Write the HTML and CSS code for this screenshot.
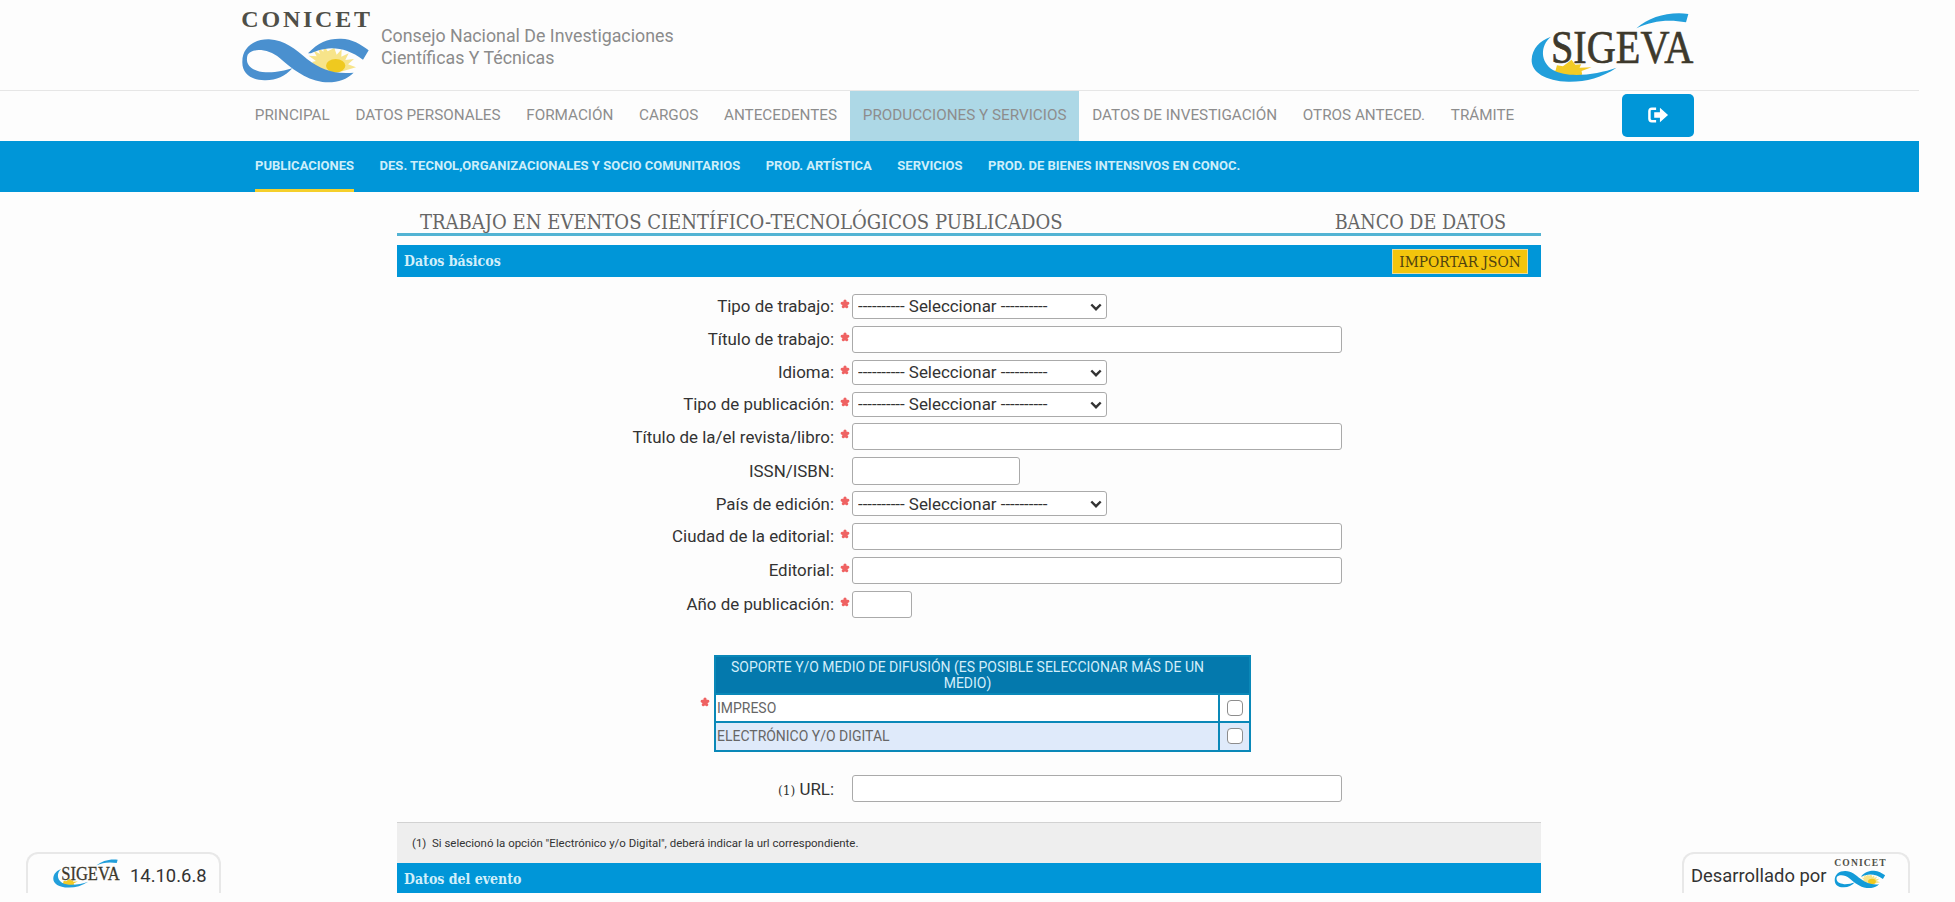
FILE: index.html
```html
<!DOCTYPE html>
<html lang="es">
<head>
<meta charset="utf-8">
<title>SIGEVA - Trabajo en eventos científico-tecnológicos publicados</title>
<link rel="stylesheet" href="styles.css">
</head>
<body>
<svg class="defs" aria-hidden="true">
  <symbol id="conicet" viewBox="0 0 435 270">
    <text class="conicet-word" x="19" y="80" textLength="386" lengthAdjust="spacing">CONICET</text>
    <path class="rays" d="M298 144l7 20 15-16-1 22 22-10-10 20 26-3-18 16 24 9-28 8-50 14-44-26-10-12 12-3-22-16 24 2-10-18 20 11-8-22 18 15 2-18 11 17z"/>
    <ellipse class="core" cx="302" cy="197" rx="29" ry="20"/>
    <path class="ribbon" d="M22 185C22 142 58 117 102 118C150 120 180 148 216 177C258 209 300 224 356 218C332 241 302 250 262 246C208 238 168 203 134 174C100 146 52 143 38 164C28 195 52 214 92 217C125 218 148 212 172 205C150 230 122 242 88 241C46 240 21 220 22 185Z"/>
    <path class="ribbon" d="M219 160C250 126 280 115 318 116C352 117 376 132 401 151L384 179C352 156 322 145 290 145C262 146 240 154 228 160Z"/>
  </symbol>
  <symbol id="sigeva" viewBox="18 18 490 212">
    <path class="star" d="M140 161l11 15 18-2-5 11 36-2-30 12 2 11-40 5-50-6-10-9 20-3 4-16 18 3z"/>
    <path class="arc" d="M78 92C44 120 46 168 84 192C130 218 215 206 275 185C230 216 180 228 130 227C62 225 18 198 20 160C22 128 44 104 78 92Z"/>
    <path class="arc" d="M335 66C375 32 430 16 491 23L484 48C430 38 380 44 335 66Z"/>
    <text class="sigeva-word" x="78" y="170" textLength="428" lengthAdjust="spacingAndGlyphs">SIGEVA</text>
  </symbol>
  <symbol id="req" viewBox="0 0 9 9">
    <path d="M4.5 4.7V2M4.5 4.7L2 3.900M4.5 4.7L7 3.900M4.5 4.7L3 6.900M4.5 4.7L6 6.900" fill="none" stroke="#ef6262" stroke-width="2.900" stroke-linecap="round"/>
  </symbol>
  <symbol id="chev" viewBox="0 0 12 8">
    <path d="M1.3 1.5L6 6.2L10.7 1.5" fill="none" stroke="#333" stroke-width="2.4"/>
  </symbol>
</svg>

<div class="page">
  <header class="brand">
    <svg class="brand-logo"><use href="#conicet"/></svg>
    <p class="brand-name">Consejo Nacional De Investigaciones<br>Científicas Y Técnicas</p>
    <svg class="brand-sigeva"><use href="#sigeva"/></svg>
  </header>

  <nav class="mainnav">
    <a>PRINCIPAL</a><a>DATOS PERSONALES</a><a>FORMACIÓN</a><a>CARGOS</a><a>ANTECEDENTES</a><a class="active">PRODUCCIONES Y SERVICIOS</a><a>DATOS DE INVESTIGACIÓN</a><a>OTROS ANTECED.</a><a>TRÁMITE</a>
    <button class="exit" aria-label="Salir">
      <svg viewBox="0 0 22 16"><path d="M8.5 1.5H4Q1.5 1.5 1.5 4V12Q1.5 14.500 4 14.500H8.500" fill="none" stroke="#fff" stroke-width="2.600"/><path d="M6.500 5H12.500V.5L21 8L12.500 15.500V11H6.500Z" fill="#fff"/></svg>
    </button>
  </nav>

  <nav class="subnav">
    <a class="current">PUBLICACIONES</a><a>DES. TECNOL,ORGANIZACIONALES Y SOCIO COMUNITARIOS</a><a>PROD. ARTÍSTICA</a><a>SERVICIOS</a><a>PROD. DE BIENES INTENSIVOS EN CONOC.</a>
  </nav>

  <main class="content">
    <div class="title"><h1>TRABAJO EN EVENTOS CIENTÍFICO-TECNOLÓGICOS PUBLICADOS</h1><h2>BANCO DE DATOS</h2></div>
    <div class="section"><h3>Datos básicos</h3><button class="import">IMPORTAR JSON</button></div>

    <form class="fields">
      <label>Tipo de trabajo:</label><svg class="req"><use href="#req"/></svg>
      <div class="select"><select><option>---------- Seleccionar ----------</option></select><svg><use href="#chev"/></svg></div>
      <label>Título de trabajo:</label><svg class="req"><use href="#req"/></svg>
      <input class="long" type="text">
      <label>Idioma:</label><svg class="req"><use href="#req"/></svg>
      <div class="select"><select><option>---------- Seleccionar ----------</option></select><svg><use href="#chev"/></svg></div>
      <label>Tipo de publicación:</label><svg class="req"><use href="#req"/></svg>
      <div class="select"><select><option>---------- Seleccionar ----------</option></select><svg><use href="#chev"/></svg></div>
      <label>Título de la/el revista/libro:</label><svg class="req"><use href="#req"/></svg>
      <input class="long" type="text">
      <label>ISSN/ISBN:</label><span></span>
      <input class="mid" type="text">
      <label>País de edición:</label><svg class="req"><use href="#req"/></svg>
      <div class="select"><select><option>---------- Seleccionar ----------</option></select><svg><use href="#chev"/></svg></div>
      <label>Ciudad de la editorial:</label><svg class="req"><use href="#req"/></svg>
      <input class="long" type="text">
      <label>Editorial:</label><svg class="req"><use href="#req"/></svg>
      <input class="long" type="text">
      <label>Año de publicación:</label><svg class="req"><use href="#req"/></svg>
      <input class="short" type="text">
    </form>

    <div class="support">
      <svg class="req"><use href="#req"/></svg>
      <table>
        <tr class="head"><th>SOPORTE Y/O MEDIO DE DIFUSIÓN (ES POSIBLE SELECCIONAR MÁS DE UN MEDIO)</th><th></th></tr>
        <tr><td>IMPRESO</td><td class="check"><input type="checkbox"></td></tr>
        <tr class="alt"><td>ELECTRÓNICO Y/O DIGITAL</td><td class="check"><input type="checkbox"></td></tr>
      </table>
    </div>

    <div class="url"><label><small>(1)</small> URL:</label><input class="long" type="text"></div>
    <div class="note">(1)&nbsp; Si selecionó la opción "Electrónico y/o Digital", deberá indicar la url correspondiente.</div>
    <div class="section last"><h3>Datos del evento</h3></div>
  </main>

  <div class="badge version"><svg class="mini-sigeva"><use href="#sigeva"/></svg><span>14.10.6.8</span></div>
  <div class="badge author"><span>Desarrollado por</span><svg class="mini-conicet" viewBox="19 28 386 218"><use href="#conicet" width="435" height="270"/></svg></div>
</div>
</body>
</html>
```
FILE: styles.css
```css
* { box-sizing: border-box; }
body { margin: 0; background: #fdfdfd; font-family: Roboto, "Liberation Sans", sans-serif; overflow: hidden; }
h1, h2, h3, p { margin: 0; font-weight: 400; }
button { border: 0; padding: 0; }
.defs { display: none; }
.page { position: relative; width: 1919px; height: 893px; overflow: hidden; display: flex; flex-direction: column; }

.conicet-word { font: 700 72px "Liberation Serif", serif; fill: #4f4f48; }
.ribbon { fill: var(--ribbon, #4a90cf); }
.rays { fill: #f7e48a; }
.core { fill: #efc91f; }
.star { fill: #f3cb25; }
.arc { fill: #229fdb; }
.sigeva-word { font: 400 140px "Liberation Serif", serif; fill: #3d392c; stroke: #3d392c; stroke-width: 2; }

.brand { flex: none; height: 91px; padding: 0 225px 0 235px; display: flex; align-items: flex-start; border-bottom: 1px solid #e6e6e6; }
.brand-logo { width: 145px; height: 90px; }
.brand-name { margin: 25px 0 0 1px; font-size: 17.8px; line-height: 21.5px; color: #8b8b8b; }
.brand-sigeva { width: 163px; height: 71px; margin: 12px 0 0 auto; }

.mainnav { flex: none; height: 50px; padding: 0 225px 0 242px; display: flex; align-items: center; font-size: 15.26px; color: #8d8d8d; }
.mainnav a { height: 50px; padding: 0 12.85px; line-height: 48px; white-space: nowrap; }
.mainnav .active { background: #add8e6; }
.exit { width: 72px; height: 43px; margin: -2px 0 0 auto; border-radius: 5px; background: #0096d8; display: grid; place-items: center; }
.exit svg { width: 21px; height: 16px; }

.subnav { flex: none; height: 51px; padding-left: 255px; display: flex; gap: 25.5px; background: #0096d8; color: #cdeefa; font-size: 13.03px; font-weight: 700; line-height: 49px; white-space: nowrap; }
.subnav .current { border-bottom: 3px solid #f5cf2b; }

.content { width: 1144px; margin-left: 397px; }
.title { height: 44px; padding: 17px 35px 0 23px; display: flex; justify-content: space-between; border-bottom: 3px solid #52b3d3; font-family: "DejaVu Serif Condensed", "DejaVu Serif", serif; color: #666; line-height: 26px; }
.title h1, .title h2 { font-size: 20.04px; white-space: nowrap; }
.title h2 { font-size: 19.6px; line-height: 27px; }
.section { height: 32px; margin-top: 9px; padding: 0 13px 0 7px; display: flex; align-items: center; justify-content: space-between; background: #0096d8; color: #d2effa; font-family: "DejaVu Serif Condensed", "DejaVu Serif", serif; }
.section h3 { font-size: 14px; font-weight: 700; }
.import { width: 136px; height: 25px; margin-top: 1px; background: #f3c50c; border: 1px solid #e9dc9c; font: 15.3px "DejaVu Serif Condensed", "DejaVu Serif", serif; color: #4f4210; white-space: nowrap; }

.fields { display: grid; margin-top: 13px; grid-template-columns: 437px 18px 1fr; grid-template-rows: 32px 34px 32px 32px 33px 35px 31px 34px 34px 34.500px; align-items: center; font-size: 16.91px; color: #333; }
.fields label { text-align: right; white-space: nowrap; }
.req { width: 10px; height: 10px; display: block; }
.fields .req { margin: -5px 0 0 6px; }
input[type="text"], select { display: block; margin: 0; border: 1.500px solid #aaa; border-radius: 3px; background: #fff; }
.long { width: 490px; height: 27px; }
.mid { width: 168px; height: 28px; }
.short { width: 60px; height: 27px; }
.select { position: relative; width: 255px; }
.select select { appearance: none; width: 255px; height: 25px; padding: 0 0 0 5px; font: 16.9px Roboto, sans-serif; color: #333; }
.select svg { position: absolute; right: 5px; top: 9px; width: 12px; height: 8px; }

.support { margin: 33px 0 0 303px; display: flex; gap: 4px; }
.support > .req { margin-top: 42px; }
.support table { width: 537px; border-collapse: collapse; font-size: 13.98px; color: #666; border: 2px solid #0a88b8; }
.support th, .support td { padding: 0 1px; font-weight: 400; text-align: left; }
.support .head { height: 38px; background: #0479ad; color: #d2eefa; line-height: 16.5px; }
.support .head th:first-child { text-align: center; padding: 1px 14px 0; }
.support tr { height: 28.500px; }
.support td { border: 2px solid #0a88b8; background: #fff; }
.support .alt td { background: #dfeafa; }
.support .check { width: 31px; text-align: center; }
.support .check input { appearance: none; display: block; width: 16px; height: 16px; margin: 0 auto; border: 1.500px solid #8d8d8d; border-radius: 4px; background: #fff; }

.url { height: 28px; margin-top: 23px; display: flex; align-items: center; gap: 18px; font-size: 16.9px; color: #333; }
.url label { width: 437px; text-align: right; }
.url small { font: 13.5px "DejaVu Serif Condensed", "DejaVu Serif", serif; }
.note { height: 41px; margin-top: 19px; padding-left: 15px; border-top: 1px solid #d2d2d2; background: #eee; font-size: 11.46px; line-height: 40px; color: #333; }
.section.last { margin-top: 0; }

.badge { position: absolute; bottom: 0; height: 41px; border: 2px solid #e8e8e8; border-bottom: 0; border-radius: 12px 12px 0 0; background: #fdfdfd; display: flex; align-items: center; font-size: 18.4px; line-height: 30px; color: #333; white-space: nowrap; }
.version { left: 26px; width: 195px; padding-left: 25px; gap: 10px; }
.author { left: 1682px; width: 228px; padding-left: 7px; gap: 7px; --ribbon: #139bd8; }
.badge span { padding-top: 4px; }
.mini-sigeva { width: 67px; height: 29px; }
.mini-conicet { width: 52px; height: 29px; }
.mini-conicet .conicet-word { fill: #888; }
```
